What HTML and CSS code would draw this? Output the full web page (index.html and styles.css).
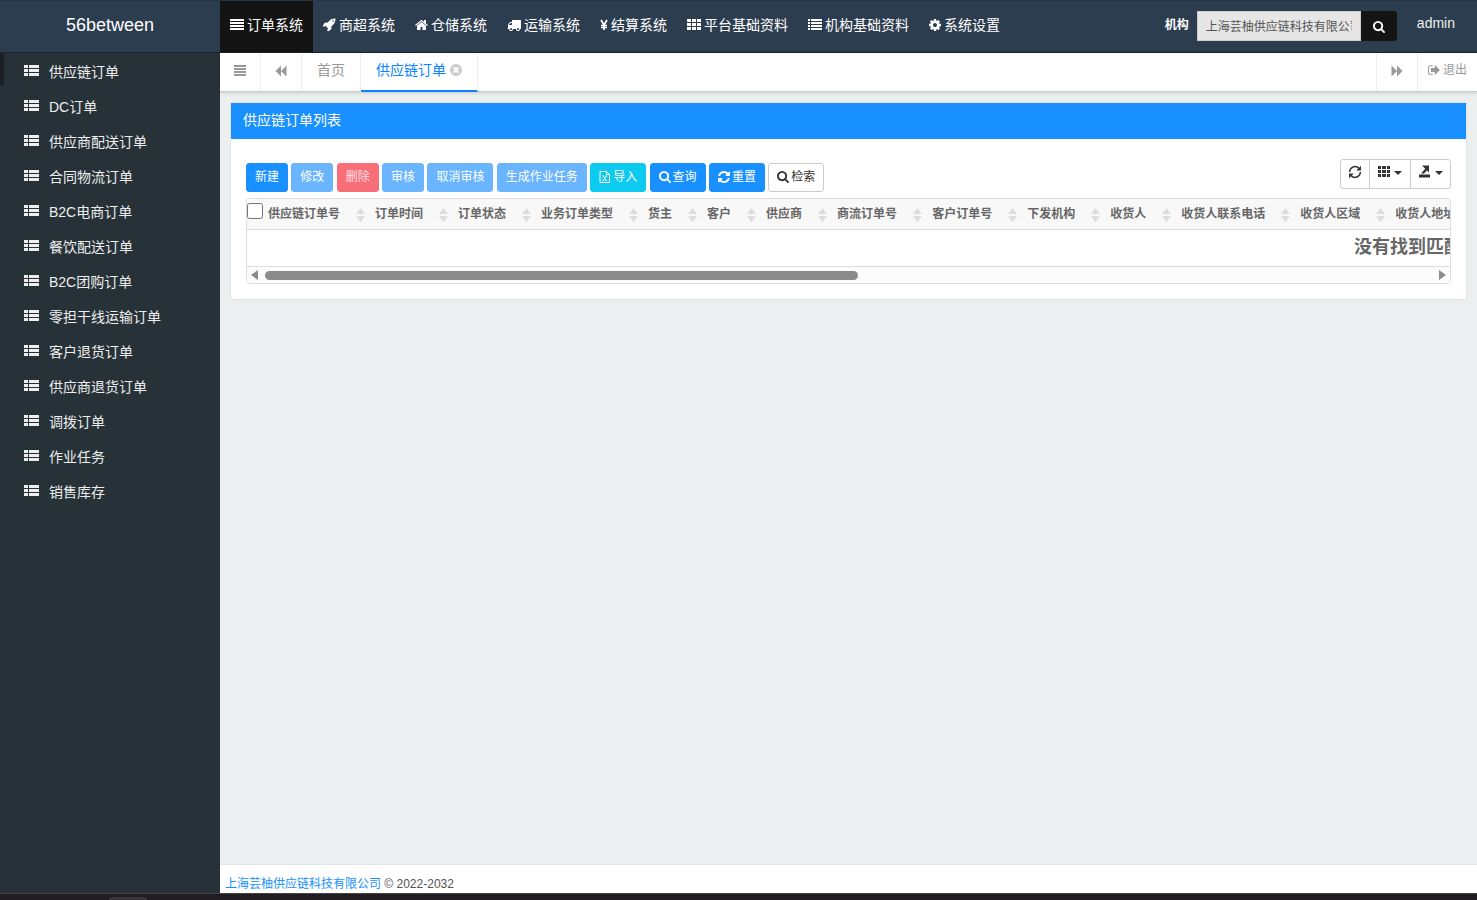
FILE: index.html
```html
<!DOCTYPE html>
<html lang="zh-CN">
<head>
<meta charset="utf-8">
<title>56between</title>
<meta name="viewport" content="width=device-width, initial-scale=1">
<link rel="stylesheet" href="styles.css">
</head>
<body>
<svg class="sprite" aria-hidden="true">
  <symbol id="i-justify" viewBox="0 0 14 14" preserveAspectRatio="none"><path d="M0 1h14v2H0zM0 4h14v2H0zM0 7h14v2H0zM0 10h14v2H0z"/></symbol>
  <symbol id="i-thlist" viewBox="0 0 15 12"><path d="M0 0h4v3H0zM5 0h10v3H5zM0 4h4v3H0zM5 4h10v3H5zM0 8h4v3H0zM5 8h10v3H5z"/></symbol>
  <symbol id="i-th" viewBox="0 0 14 14"><path d="M0 1h4v3H0zM5 1h4v3H5zM10 1h4v3h-4zM0 5h4v3H0zM5 5h4v3H5zM10 5h4v3h-4zM0 9h4v3H0zM5 9h4v3H5zM10 9h4v3h-4z"/></symbol>
  <symbol id="i-cells" viewBox="0 0 12 14"><path d="M0 1h3v3H0zM4 1h4v3H4zM9 1h3v3H9zM0 5h3v3H0zM4 5h4v3H4zM9 5h3v3H9zM0 9h3v3H0zM4 9h4v3H4zM9 9h3v3H9z"/></symbol>
  <symbol id="i-list" viewBox="0 0 14 14"><path d="M0 1h2v2H0zM3 1h11v2H3zM0 4h2v2H0zM3 4h11v2H3zM0 7h2v2H0zM3 7h11v2H3zM0 10h2v2H0zM3 10h11v2H3z"/></symbol>
  <symbol id="i-rocket" viewBox="64 64 1664 1792"><path d="M1440 448q0-40-28-68t-68-28-68 28-28 68 28 68 68 28 68-28 28-68zm224-288q0 249-75.500 430.500t-253.500 360.500q-81 80-195 176l-20 379q-2 16-16 26l-384 224q-7 4-16 4-12 0-23-9l-64-64q-13-14-8-32l85-276-281-281-276 85q-3 1-9 1-14 0-23-9l-64-64q-17-19-5-39l224-384q10-14 26-16l379-20q96-114 176-195 188-187 358-258t431-71q14 0 24 9.500t10 22.500z"/></symbol>
  <symbol id="i-home" viewBox="64 0 1664 1792"><path d="M1472 992v480q0 26-19 45t-45 19h-384v-384h-256v384h-384q-26 0-45-19t-19-45v-480q0-1 .5-3t.5-3l575-474 575 474q1 2 1 6zm223-69l-62 74q-8 9-21 11h-3q-13 0-21-7l-692-577-692 577q-12 8-24 7-13-2-21-11l-62-74q-8-10-7-23.500t11-21.500l719-599q32-26 76-26t76 26l244 204v-195q0-14 9-23t23-9h192q14 0 23 9t9 23v408l219 182q10 8 11 21.500t-7 23.500z"/></symbol>
  <symbol id="i-truck" viewBox="0 0 1792 1792"><path d="M640 1408q0-52-38-90t-90-38-90 38-38 90 38 90 90 38 90-38 38-90zm-384-512h384v-256h-158q-13 0-22 9l-195 195q-9 9-9 22v30zm1280 512q0-52-38-90t-90-38-90 38-38 90 38 90 90 38 90-38 38-90zm256-1088v1024q0 15-4 26.500t-13.500 18.500-16.500 11.500-23.500 6-22.500 2-25.500 0-22.500-.5q0 106-75 181t-181 75-181-75-75-181h-384q0 106-75 181t-181 75-181-75-75-181h-64q-3 0-22.500.5t-25.500 0-22.500-2-23.500-6-16.500-11.500-13.500-18.500-4-26.500q0-26 19-45t45-19v-320q0-8-.5-35t0-38 2.500-34.500 6.500-37 14-30.500 22.500-30l198-198q19-19 50.500-32t58.500-13h160v-192q0-26 19-45t45-19h1024q26 0 45 19t19 45z"/></symbol>
  <symbol id="i-yen" viewBox="0 0 8 14"><path d="M1 2l3 5 3-5M4 7v5M1 7.500h6M1 9.500h6" fill="none" stroke="currentColor" stroke-width="1.700"/></symbol>
  <symbol id="i-cog" viewBox="128 0 1536 1792"><path d="M1152 896q0-106-75-181t-181-75-181 75-75 181 75 181 181 75 181-75 75-181zm512-109v222q0 12-8 23t-20 13l-185 28q-19 54-39 91 35 50 107 138 10 12 10 25t-9 23q-27 37-99 108t-94 71q-12 0-26-9l-138-108q-44 23-91 38-16 136-29 186-7 28-36 28h-222q-14 0-24.500-8.500t-11.500-21.500l-28-184q-49-16-90-37l-141 107q-10 9-25 9-14 0-25-11-126-114-165-168-7-10-7-23 0-12 8-23 15-21 51-66.500t54-70.500q-27-50-41-99l-183-27q-13-2-21-12.500t-8-23.500v-222q0-12 8-23t19-13l186-28q14-46 39-92-40-57-107-138-10-12-10-24 0-10 9-23 26-36 98.500-107.500t94.500-71.500q13 0 26 10l138 107q44-23 91-38 16-136 29-186 7-28 36-28h222q14 0 24.500 8.500t11.500 21.500l28 184q49 16 90 37l142-107q9-9 24-9 13 0 25 10 129 119 165 170 7 8 7 22 0 12-8 23-15 21-51 66.500t-54 70.500q26 50 41 98l183 28q13 2 21 12.500t8 23.500z"/></symbol>
  <symbol id="i-search" viewBox="64 128 1664 1664"><path d="M1216 832q0-185-131.500-316.500t-316.500-131.500-316.500 131.500-131.500 316.500 131.500 316.500 316.500 131.500 316.500-131.500 131.500-316.500zm512 832q0 52-38 90t-90 38q-54 0-90-38l-343-342q-179 124-399 124-143 0-273.500-55.500t-225-150-150-225-55.500-273.500 55.500-273.500 150-225 225-150 273.500-55.500 273.500 55.500 225 150 150 225 55.500 273.500q0 220-124 399l343 343q37 37 37 90z"/></symbol>
  <symbol id="i-refresh" viewBox="128 128 1536 1536"><path d="M1639 1056q0 5-1 7-64 268-268 434.500t-478 166.500q-146 0-282.500-55t-243.500-157l-129 129q-19 19-45 19t-45-19-19-45v-448q0-26 19-45t45-19h448q26 0 45 19t19 45-19 45l-137 137q71 66 161 102t187 36q134 0 250-65t186-179q11-17 53-117 8-23 30-23h192q13 0 22.500 9.500t9.500 22.500zm25-800v448q0 26-19 45t-45 19h-448q-26 0-45-19t-19-45 19-45l138-138q-148-137-349-137-134 0-250 65t-186 179q-11 17-53 117-8 23-30 23h-199q-13 0-22.500-9.500t-9.500-22.500v-7q65-268 270-434.500t480-166.500q146 0 284 55.500t245 156.500l130-129q19-19 45-19t45 19 19 45z"/></symbol>
  <symbol id="i-sync" viewBox="0 0 14 14"><path d="M1.700 7a5.300 5.300 0 0 1 9.300-3.500M12.300 7a5.300 5.300 0 0 1-9.300 3.500" fill="none" stroke="currentColor" stroke-width="1.500"/><path d="M13 .8v4.700H8.300zM1 13.200V8.500h4.700z"/></symbol>
  <symbol id="i-close" viewBox="128 128 1536 1536"><path d="M1277 1122q0-26-19-45l-181-181 181-181q19-19 19-45 0-27-19-46l-90-90q-19-19-46-19-26 0-45 19l-181 181-181-181q-19-19-45-19-27 0-46 19l-90 90q-19 19-19 46 0 26 19 45l181 181-181 181q-19 19-19 45 0 27 19 46l90 90q19 19 46 19 26 0 45-19l181-181 181 181q19 19 45 19 27 0 46-19l90-90q19-19 19-46zm387-226q0 209-103 385.500t-279.500 279.500-385.500 103-385.500-103-279.500-279.500-103-385.500 103-385.500 279.500-279.500 385.500-103 385.500 103 279.500 279.500 103 385.500z"/></symbol>
  <symbol id="i-signout" viewBox="64 128 1600 1536"><path d="M704 1440q0 4 1 20t.5 26.500-3 23.500-10 19.500-20.500 6.500h-320q-119 0-203.500-84.500t-84.500-203.500v-704q0-119 84.500-203.500t203.500-84.500h320q13 0 22.500 9.500t9.500 22.500q0 4 1 20t.5 26.500-3 23.500-10 19.500-20.500 6.500h-320q-66 0-113 47t-47 113v704q0 66 47 113t113 47h312l11.500 1 11.500 3 8 5.500 7 9 2 13.500zm928-544q0 26-19 45l-544 544q-19 19-45 19t-45-19-19-45v-288h-448q-26 0-45-19t-19-45v-384q0-26 19-45t45-19h448v-288q0-26 19-45t45-19 45 19l544 544q19 19 19 45z"/></symbol>
  <symbol id="i-back" viewBox="0 0 12 12"><path d="M6 .5v11L0.500 6zM11.500 .5v11L6 6z"/></symbol>
  <symbol id="i-forward" viewBox="0 0 12 12"><path d="M6 .5v11l5.500-5.500zM0.500 .5v11L6 6z"/></symbol>
  <symbol id="i-excel" viewBox="0 0 12 12"><path d="M1 .5h6.500L10.500 3.500v8H1zM7.500 .5v3h3M3.500 5h1.500M6.500 5H8M3.500 9.500H5M6.500 9.500H8M4.200 5l3 4.500M7.200 5l-3 4.500" fill="none" stroke="currentColor"/></symbol>
  <symbol id="i-export" viewBox="0 0 12 13"><path d="M0 9h11v3H0zM3 0h7v7L8 5 5 8H2l4-4.500L6 3z"/></symbol>
  <symbol id="i-caret" viewBox="0 0 8 4"><path d="M0 0h8L4 4z"/></symbol>
  <symbol id="i-sort" viewBox="0 0 9 16"><path d="M4.500 1L9 7H0zM4.500 15L0 9h9z"/></symbol>
</svg>

<header class="topbar">
  <a class="brand" href="#">56between</a>
  <nav class="systems">
    <a class="system active" href="#"><svg class="ico w14"><use href="#i-justify"/></svg>订单系统</a>
    <a class="system" href="#"><svg class="ico w13"><use href="#i-rocket"/></svg>商超系统</a>
    <a class="system" href="#"><svg class="ico w13"><use href="#i-home"/></svg>仓储系统</a>
    <a class="system" href="#"><svg class="ico w14"><use href="#i-truck"/></svg>运输系统</a>
    <a class="system" href="#"><svg class="ico w8"><use href="#i-yen"/></svg>结算系统</a>
    <a class="system" href="#"><svg class="ico w14"><use href="#i-th"/></svg>平台基础资料</a>
    <a class="system" href="#"><svg class="ico w14"><use href="#i-list"/></svg>机构基础资料</a>
    <a class="system" href="#"><svg class="ico w12"><use href="#i-cog"/></svg>系统设置</a>
  </nav>
  <form class="org">
    <label for="org">机构</label>
    <input id="org" type="text" value="上海芸柚供应链科技有限公司" readonly>
    <button type="button" aria-label="搜索机构"><svg class="ico w12"><use href="#i-search"/></svg></button>
  </form>
  <a class="user" href="#">admin</a>
</header>

<div class="shell">
  <nav class="sidebar">
    <a class="active" href="#"><svg><use href="#i-thlist"/></svg>供应链订单</a>
    <a href="#"><svg><use href="#i-thlist"/></svg>DC订单</a>
    <a href="#"><svg><use href="#i-thlist"/></svg>供应商配送订单</a>
    <a href="#"><svg><use href="#i-thlist"/></svg>合同物流订单</a>
    <a href="#"><svg><use href="#i-thlist"/></svg>B2C电商订单</a>
    <a href="#"><svg><use href="#i-thlist"/></svg>餐饮配送订单</a>
    <a href="#"><svg><use href="#i-thlist"/></svg>B2C团购订单</a>
    <a href="#"><svg><use href="#i-thlist"/></svg>零担干线运输订单</a>
    <a href="#"><svg><use href="#i-thlist"/></svg>客户退货订单</a>
    <a href="#"><svg><use href="#i-thlist"/></svg>供应商退货订单</a>
    <a href="#"><svg><use href="#i-thlist"/></svg>调拨订单</a>
    <a href="#"><svg><use href="#i-thlist"/></svg>作业任务</a>
    <a href="#"><svg><use href="#i-thlist"/></svg>销售库存</a>
  </nav>

  <div class="main">
    <div class="tabs">
      <button class="tab-tool" type="button" aria-label="菜单"><svg class="ico w12"><use href="#i-justify"/></svg></button>
      <button class="tab-tool" type="button" aria-label="向左"><svg class="ico w12"><use href="#i-back"/></svg></button>
      <a class="tab" href="#">首页</a>
      <a class="tab current" href="#">供应链订单<svg class="ico w12 close"><use href="#i-close"/></svg></a>
      <span class="grow"></span>
      <button class="tab-tool end" type="button" aria-label="向右"><svg class="ico w12"><use href="#i-forward"/></svg></button>
      <a class="logout" href="#"><svg class="ico w12"><use href="#i-signout"/></svg>退出</a>
    </div>

    <main class="content">
      <section class="card">
        <h1>供应链订单列表</h1>
        <div class="card-body">
          <div class="toolbar">
            <div class="actions">
              <button class="btn" type="button">新建</button>
              <button class="btn soft" type="button">修改</button>
              <button class="btn danger" type="button">删除</button>
              <button class="btn soft" type="button">审核</button>
              <button class="btn soft" type="button">取消审核</button>
              <button class="btn soft" type="button">生成作业任务</button>
              <button class="btn info" type="button"><svg class="ico w12"><use href="#i-excel"/></svg>导入</button>
              <button class="btn" type="button"><svg class="ico w12"><use href="#i-search"/></svg>查询</button>
              <button class="btn" type="button"><svg class="ico w12"><use href="#i-refresh"/></svg>重置</button>
              <button class="btn plain" type="button"><svg class="ico w12"><use href="#i-search"/></svg>检索</button>
            </div>
            <div class="tools">
              <button type="button" aria-label="刷新"><svg class="ico w14"><use href="#i-sync"/></svg></button>
              <button type="button" aria-label="列"><svg class="ico w12"><use href="#i-cells"/></svg><svg class="caret"><use href="#i-caret"/></svg></button>
              <button type="button" aria-label="导出"><svg class="ico w12"><use href="#i-export"/></svg><svg class="caret"><use href="#i-caret"/></svg></button>
            </div>
          </div>
          <div class="grid">
            <div class="scroller">
              <table>
                <thead>
                  <tr>
                    <th class="check"><input type="checkbox" aria-label="全选"></th>
                    <th>供应链订单号<svg><use href="#i-sort"/></svg></th>
                    <th>订单时间<svg><use href="#i-sort"/></svg></th>
                    <th>订单状态<svg><use href="#i-sort"/></svg></th>
                    <th>业务订单类型<svg><use href="#i-sort"/></svg></th>
                    <th>货主<svg><use href="#i-sort"/></svg></th>
                    <th>客户<svg><use href="#i-sort"/></svg></th>
                    <th>供应商<svg><use href="#i-sort"/></svg></th>
                    <th>商流订单号<svg><use href="#i-sort"/></svg></th>
                    <th>客户订单号<svg><use href="#i-sort"/></svg></th>
                    <th>下发机构<svg><use href="#i-sort"/></svg></th>
                    <th>收货人<svg><use href="#i-sort"/></svg></th>
                    <th>收货人联系电话<svg><use href="#i-sort"/></svg></th>
                    <th>收货人区域<svg><use href="#i-sort"/></svg></th>
                    <th class="last">收货人地址<svg><use href="#i-sort"/></svg></th>
                  </tr>
                </thead>
                <tbody>
                  <tr><td colspan="15">没有找到匹配的记录</td></tr>
                </tbody>
              </table>
            </div>
            <div class="scrollbar">
              <span class="arrow left"></span>
              <span class="track"><span class="thumb"></span></span>
              <span class="arrow right"></span>
            </div>
          </div>
        </div>
      </section>
    </main>

    <footer class="footer"><a href="#">上海芸柚供应链科技有限公司</a> © 2022-2032</footer>
  </div>
</div>
<div class="dock"><span></span></div>
</body>
</html>
```
FILE: styles.css
```css
* { box-sizing: border-box; }

body {
  margin: 0;
  height: 100vh;
  display: flex;
  flex-direction: column;
  overflow: hidden;
  font-family: "Liberation Sans", "Noto Sans CJK SC", sans-serif;
  font-size: 14px;
  line-height: 20px;
  color: #555;
  background: #ebeff0;
}

a { color: inherit; text-decoration: none; }
button, input { font: inherit; }
button { cursor: pointer; }
svg { fill: currentColor; flex: none; }
.sprite { position: absolute; width: 0; height: 0; }

.ico { height: 14px; }
.w8 { width: 8px; }
.w12 { width: 12px; }
.w13 { width: 13px; }
.w14 { width: 14px; }

/* Top bar */
.topbar {
  display: flex;
  flex: none;
  height: 53px;
  background: #2d3d50;
  border-top: 1px solid #263647;
  border-bottom: 1px solid #1b2230;
  color: #fff;
}
.brand {
  flex: none;
  width: 220px;
  text-align: center;
  font-size: 18px;
  line-height: 48px;
}
.systems { display: flex; flex: 1; min-width: 0; }
.system {
  display: flex;
  align-items: center;
  gap: 3px;
  padding: 0 10px 3px;
  white-space: nowrap;
}
.system.active { background: #141414; }
.org {
  display: flex;
  align-items: center;
  height: 30px;
  margin-top: 10px;
  font-size: 12px;
}
.org label { font-weight: bold; margin-right: 8px; padding-bottom: 3px; }
.org input {
  width: 164px;
  height: 30px;
  padding: 0 8px 2px;
  border: 1px solid #ccc;
  border-radius: 0;
  background: #e6e6e6;
  color: #555;
}
.org button {
  display: flex;
  align-items: center;
  justify-content: center;
  width: 36px;
  height: 30px;
  padding: 2px 0 0;
  border: 0;
  border-radius: 0 3px 3px 0;
  background: #141414;
  color: #fff;
}
.user { padding: 12px 22px 0 20px; color: #eee; }

/* Sidebar */
.shell { display: flex; flex: 1; min-height: 0; }
.sidebar { flex: none; width: 220px; background: #263238; color: #eee; }
.sidebar a {
  display: flex;
  align-items: center;
  gap: 10px;
  height: 32px;
  margin-bottom: 3px;
  padding: 6px 0 0 20px;
  border-left: 4px solid transparent;
}
.sidebar a.active { border-left-color: #1b2024; }
.sidebar svg { width: 15px; height: 12px; margin-bottom: 2px; }

/* Tabs */
.main { display: flex; flex-direction: column; flex: 1; min-width: 0; }
.tabs {
  display: flex;
  flex: none;
  height: 39px;
  background: #fff;
  color: #999;
  border-bottom: 1px solid #ccc;
  box-shadow: 0 1px 3px rgba(0, 0, 0, .15);
}
.tab-tool {
  display: flex;
  align-items: center;
  justify-content: center;
  width: 41px;
  padding: 0 0 3px;
  border: 0;
  border-right: 1px solid #eee;
  background: none;
  color: #999;
}
.tab-tool.end { width: 42px; border-left: 1px solid #eee; }
.tab {
  display: flex;
  align-items: center;
  gap: 4px;
  height: 39px;
  padding: 0 15px 6px;
  border-right: 1px solid #eee;
  white-space: nowrap;
}
.tab.current {
  padding-bottom: 4px;
  border-bottom: 2px solid #0a84ff;
  color: #0a84ff;
}
.close { color: #ccc; }
.grow { flex: 1; }
.logout {
  display: flex;
  align-items: center;
  gap: 3px;
  padding: 0 10px 4px;
  font-size: 12px;
}

/* Card */
.content { flex: 1; min-height: 0; padding: 10px; }
.card { background: #fff; border: 1px solid #e1e5e6; }
.card h1 {
  margin: 0;
  padding: 7px 12px 9px;
  background: #1890ff;
  color: #fff;
  font-size: 14px;
  font-weight: normal;
}
.card-body { padding: 20px 15px 15px; }
.toolbar { display: flex; justify-content: space-between; height: 39px; }
.actions { padding-top: 4px; font-size: 12px; white-space: nowrap; }
.btn {
  display: inline-flex;
  align-items: center;
  gap: 2px;
  height: 29px;
  padding: 0 8px 2px;
  border: 1px solid #1890ff;
  border-radius: 3px;
  background: #1890ff;
  color: #fff;
  vertical-align: top;
}
.btn.soft { background: #6ab5ff; border-color: #6ab5ff; }
.btn.danger { background: #f96f79; border-color: #f96f79; color: #ffdfe1; }
.btn.info { background: #0dcaf0; border-color: #0dcaf0; }
.btn.plain { background: #fff; border-color: #ccc; color: #333; }

.tools { display: flex; }
.tools button {
  display: flex;
  align-items: center;
  justify-content: center;
  gap: 4px;
  width: 42px;
  height: 30px;
  margin-left: -1px;
  padding: 0 0 4px;
  border: 1px solid #ccc;
  background: #fff;
  color: #333;
}
.tools button:first-child { width: 30px; border-radius: 3px 0 0 3px; }
.tools button:last-child { width: 41px; border-radius: 0 3px 3px 0; }
.caret { width: 8px; height: 4px; margin-top: 2px; }

/* Data grid */
.grid { overflow: hidden; border: 1px solid #ddd; border-radius: 4px; }
.scroller { overflow: hidden; }
table { width: 2376px; border-collapse: separate; border-spacing: 0; }
th {
  height: 31px;
  padding: 0 6px 0 4px;
  background: #f8f8f8;
  border-bottom: 1px solid #ddd;
  color: #666;
  font-size: 12px;
  text-align: left;
  white-space: nowrap;
}
th svg { width: 9px; height: 16px; margin-left: 16px; color: #ddd; vertical-align: middle; }
th.check { padding: 0; }
th.check input { display: block; width: 16px; height: 16px; margin: 0 1px 6px 0; }
th.last { width: 100%; }
td {
  height: 36px;
  padding: 0 0 3px;
  text-align: center;
  font-size: 18px;
  font-weight: bold;
  color: #666;
}
.scrollbar {
  display: flex;
  align-items: center;
  height: 17px;
  padding: 0 4px;
  border-top: 1px solid #ddd;
  background: #fcfcfc;
}
.arrow { border: 5px solid transparent; }
.arrow.left { border-left: 0; border-right: 7px solid #8b8b8b; }
.arrow.right { border-right: 0; border-left: 7px solid #8b8b8b; }
.track { flex: 1; margin: 0 11px 0 7px; }
.thumb { display: block; width: 51%; height: 9px; border-radius: 5px; background: #8b8b8b; }

.footer {
  flex: none;
  height: 29px;
  padding: 9px 5px 0;
  border-top: 1px solid #e1e5e6;
  background: #fff;
  font-size: 12px;
}
.footer a { color: #1890ff; }

.dock { flex: none; height: 7px; padding: 3px 109px 0; border-top: 1px solid #444; background: #211c21; }
.dock span { display: block; width: 38px; height: 3px; border-radius: 3px 3px 0 0; background: #39353a; }
```
